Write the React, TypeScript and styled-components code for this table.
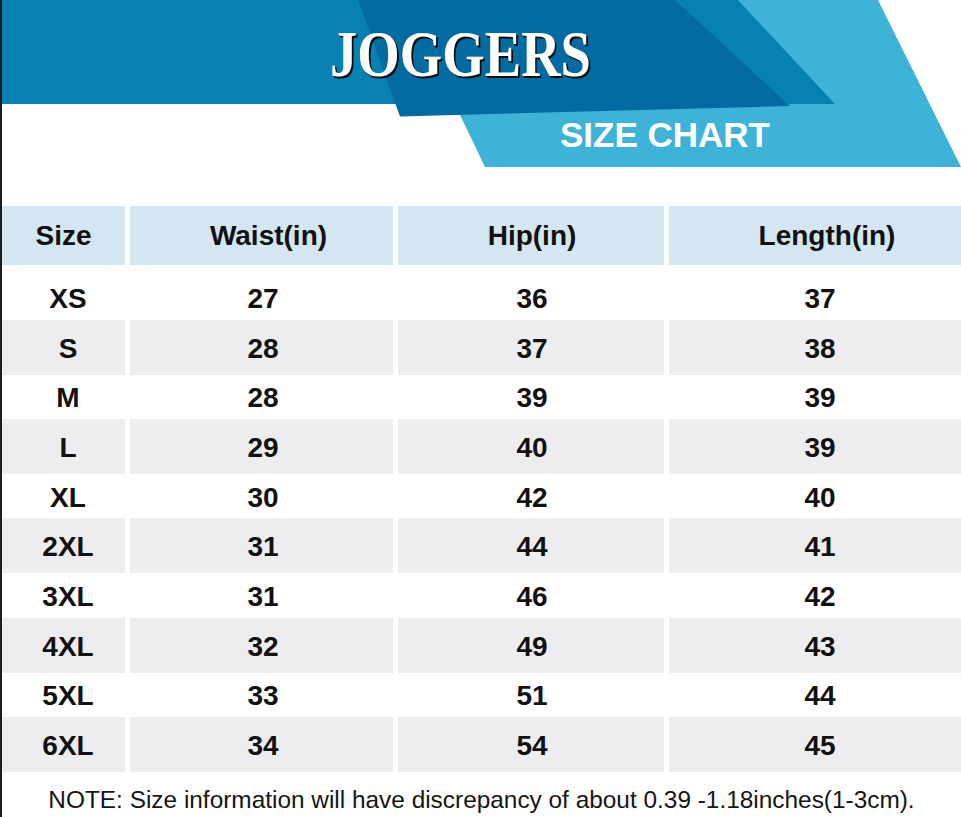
import React from "react";
import styled, { createGlobalStyle } from "styled-components";

const GlobalStyle = createGlobalStyle`
  html, body {
    margin: 0;
    padding: 0;
    background: #ffffff;
    overflow: hidden;
  }
  #root {
    width: 961px;
  }
`;

const Page = styled.div`
  box-sizing: border-box;
  width: 961px;
  height: 817px;
  border-left: 2px solid #1d1d1d;
  overflow: hidden;
  display: flex;
  flex-direction: column;
  background: #ffffff;
  font-family: "Liberation Sans", Arial, sans-serif;
  color: #111111;
`;

const Banner = styled.header`
  position: relative;
  height: 206px;
  flex: none;
  display: flex;
  flex-direction: column;
  align-items: flex-start;
`;

const BannerArt = styled.svg`
  position: absolute;
  left: 0;
  top: 0;
  width: 959px;
  height: 206px;
  z-index: 0;
`;

const Title = styled.h1`
  position: relative;
  z-index: 1;
  margin: 21.6px 0 0 328px;
  font-family: "Liberation Serif", "Times New Roman", serif;
  font-weight: 700;
  font-size: 65px;
  line-height: 1;
  color: #ffffff;
  letter-spacing: 0;
  transform: scaleX(0.84);
  transform-origin: left center;
  text-shadow: 2px 2px 0 #0d0d0d, 1px 1px 0 #0d0d0d;
`;

const SubTitle = styled.h2`
  position: relative;
  z-index: 1;
  margin: 30.8px 0 0 558px;
  font-family: "Liberation Sans", Arial, sans-serif;
  font-weight: 700;
  font-size: 35px;
  line-height: 1;
  color: #ffffff;
`;

const Table = styled.section`
  display: flex;
  flex-direction: column;
  flex: none;
`;

const Row = styled.div<{ $head?: boolean; $striped?: boolean }>`
  display: grid;
  grid-template-columns: 123px 263px 266px 310px;
  column-gap: 5px;
  height: ${(p) => (p.$head ? "59px" : p.$striped ? "55px" : "44.4px")};
  margin-bottom: ${(p) => (p.$head ? "10.2px" : "0")};
  flex: none;
`;

const Cell = styled.div<{ $head?: boolean; $striped?: boolean; $dx: number }>`
  display: flex;
  align-items: center;
  justify-content: center;
  box-sizing: border-box;
  padding-top: ${(p) => (p.$head ? "0" : "3px")};
  padding-left: ${(p) => (p.$dx > 0 ? p.$dx * 2 : 0)}px;
  padding-right: ${(p) => (p.$dx < 0 ? -p.$dx * 2 : 0)}px;
  background: ${(p) =>
    p.$head ? "#d3e6f1" : p.$striped ? "#ededf0" : "#ffffff"};
  font-family: "Liberation Sans", Arial, sans-serif;
  font-weight: 700;
  font-size: 28px;
  line-height: 1;
  color: #111111;
  white-space: nowrap;
`;

const Note = styled.p`
  margin: 16.3px 0 0;
  text-align: center;
  font-family: "Liberation Sans", Arial, sans-serif;
  font-size: 24.4px;
  line-height: 1;
  color: #151515;
  white-space: nowrap;
`;

const headers = ["Size", "Waist(in)", "Hip(in)", "Length(in)"];
const headShift = [0, 7, 1, 3];
const bodyShift = [4.5, 1.5, 1, -4];

const rows: [string, number, number, number][] = [
  ["XS", 27, 36, 37],
  ["S", 28, 37, 38],
  ["M", 28, 39, 39],
  ["L", 29, 40, 39],
  ["XL", 30, 42, 40],
  ["2XL", 31, 44, 41],
  ["3XL", 31, 46, 42],
  ["4XL", 32, 49, 43],
  ["5XL", 33, 51, 44],
  ["6XL", 34, 54, 45],
];

const o = -2;
const pts = (list: [number, number][]) =>
  list.map(([x, y]) => `${x + o},${y}`).join(" ");

export default function App() {
  return (
    <>
      <GlobalStyle />
      <Page>
        <Banner>
          <BannerArt viewBox="0 0 959 206" aria-hidden="true">
            <polygon
              fill="#3fb3d7"
              points={pts([
                [405, 0],
                [878, 0],
                [961, 167],
                [485, 167],
              ])}
            />
            <polygon
              fill="#0781b4"
              points={pts([
                [2, 0],
                [738, 0],
                [835, 104],
                [2, 104],
              ])}
            />
            <polygon
              fill="#036ba2"
              points={pts([
                [358, 0],
                [675, 0],
                [790, 106],
                [400, 116.5],
              ])}
            />
          </BannerArt>
          <Title>JOGGERS</Title>
          <SubTitle>SIZE CHART</SubTitle>
        </Banner>
        <Table>
          <Row $head>
            {headers.map((h, j) => (
              <Cell key={h} $head $dx={headShift[j]}>
                {h}
              </Cell>
            ))}
          </Row>
          {rows.map((r, i) => {
            const striped = i % 2 === 1;
            return (
              <Row key={r[0]} $striped={striped}>
                {r.map((v, j) => (
                  <Cell key={j} $striped={striped} $dx={bodyShift[j]}>
                    {v}
                  </Cell>
                ))}
              </Row>
            );
          })}
        </Table>
        <Note>
          NOTE: Size information will have discrepancy of about 0.39
          -1.18inches(1-3cm).
        </Note>
      </Page>
    </>
  );
}
